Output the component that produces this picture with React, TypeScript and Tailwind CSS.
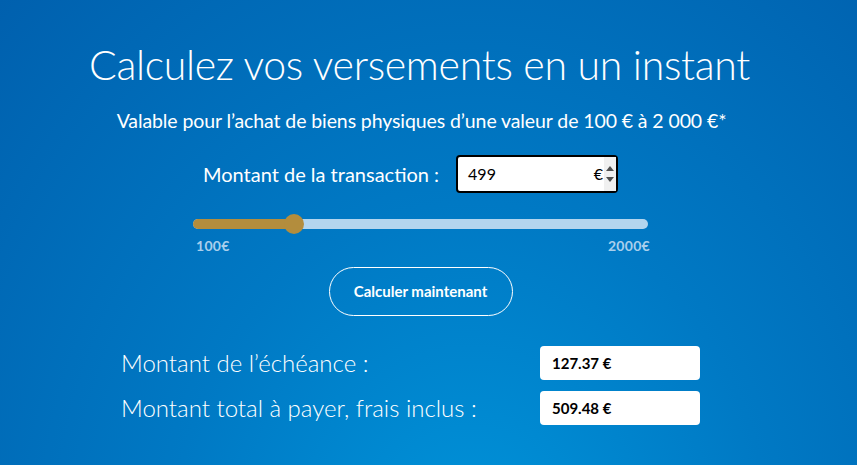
import { useState } from "react";

const MIN = 100;
const MAX = 2000;
const THUMB = 20;

export default function App() {
  const [amount, setAmount] = useState(499);
  const ratio = (amount - MIN) / (MAX - MIN);
  // keep the thumb inside the track, same as a native range input
  const thumbLeft = `calc(${THUMB / 2}px + (100% - ${THUMB}px) * ${ratio})`;

  return (
    <div
      className="h-[465px] w-[857px] overflow-hidden text-white bg-[radial-gradient(ellipse_at_55%_120%,_#0094da_0%,_#0079c4_45%,_#0060ae_100%)]"
      style={{ fontFamily: "Lato, 'Open Sans', sans-serif" }}
    >
      <div className="flex flex-col items-center">
        <h1 className="mt-[40px] ml-[-18px] text-[41px] font-light leading-[50px] tracking-[-0.3px]">
          Calculez vos versements en un instant
        </h1>
        <p className="mt-[19px] ml-[-14px] text-[19.5px] leading-[24px] tracking-[-0.1px]">
          Valable pour l’achat de biens physiques d’une valeur de 100 € à 2 000 €*
        </p>

        <div className="mt-[22px] ml-[-36px] flex items-center gap-[17px]">
          <label className="text-[20px] leading-[24px]">Montant de la transaction :</label>
          <div className="flex h-[38px] w-[162px] items-center rounded-[4px] border-2 border-black bg-white pl-[10px] text-black">
            <span className="flex-1 text-[16px]">{amount}</span>
            <span className="text-[16px]">€</span>
            <div className="ml-[1px] flex h-full w-[12px] flex-col items-center justify-center gap-[6px] bg-[#f0f0f0]">
              <svg width="8" height="5" viewBox="0 0 8 5">
                <path d="M0 5 L4 0 L8 5 Z" fill="#505050" />
              </svg>
              <svg width="8" height="5" viewBox="0 0 8 5">
                <path d="M0 0 L4 5 L8 0 Z" fill="#505050" />
              </svg>
            </div>
          </div>
        </div>

        <div className="mt-[21px] ml-[-16px] w-[455px]">
          <div className="relative h-[20px]">
            <div className="absolute left-0 right-0 top-[5px] h-[10px] rounded-full bg-[#b3d5ee]" />
            <div
              className="absolute left-0 top-[5px] h-[10px] rounded-full bg-[#b38d3d]"
              style={{ width: thumbLeft }}
            />
            <div
              className="absolute top-0 h-[20px] w-[20px] -translate-x-1/2 rounded-full bg-[#b38d3d]"
              style={{ left: thumbLeft }}
            />
            <input
              type="range"
              min={MIN}
              max={MAX}
              value={amount}
              onChange={(e) => setAmount(Number(e.target.value))}
              className="absolute inset-0 w-full cursor-pointer opacity-0"
            />
          </div>
          <div className="mt-[4px] flex justify-between text-[14px] font-bold leading-[15px] tracking-[0.3px] text-[#a9cfec]">
            <span className="ml-[3px]">100€</span>
            <span className="mr-[-2px]">2000€</span>
          </div>
        </div>

        <button className="mt-[14px] ml-[-16px] h-[49px] w-[184px] rounded-full border border-white text-[15px] font-bold">
          Calculer maintenant
        </button>
      </div>

      <div className="ml-[121px] mt-[30px] flex w-[579px] flex-col gap-[11px]">
        <div className="flex items-center justify-between">
          <span className="text-[24px] font-light leading-[28px]">Montant de l’échéance :</span>
          <div className="flex h-[34px] w-[160px] items-center rounded-[4px] bg-white pl-[12px] text-[15px] font-bold text-black">
            127.37 €
          </div>
        </div>
        <div className="flex items-center justify-between">
          <span className="text-[24px] font-light leading-[28px]">Montant total à payer, frais inclus :</span>
          <div className="flex h-[34px] w-[160px] items-center rounded-[4px] bg-white pl-[12px] text-[15px] font-bold text-black">
            509.48 €
          </div>
        </div>
      </div>
    </div>
  );
}
